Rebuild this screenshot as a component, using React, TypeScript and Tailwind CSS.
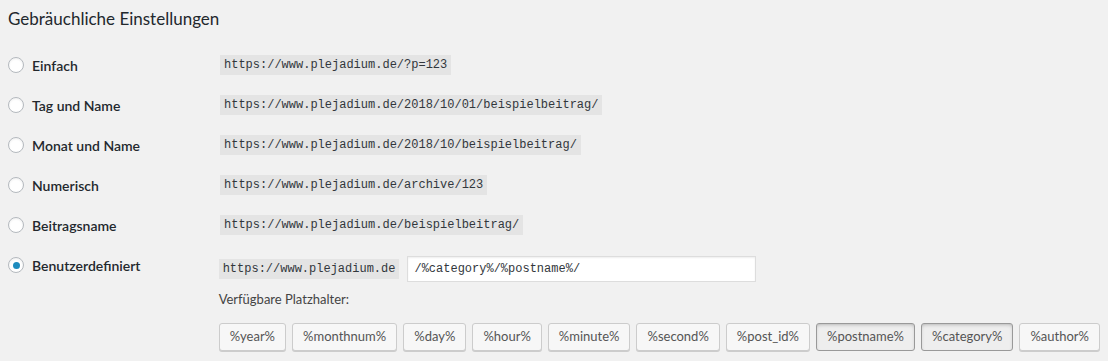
import { useState } from "react";

const options = [
  { label: "Einfach", url: "https://www.plejadium.de/?p=123" },
  { label: "Tag und Name", url: "https://www.plejadium.de/2018/10/01/beispielbeitrag/" },
  { label: "Monat und Name", url: "https://www.plejadium.de/2018/10/beispielbeitrag/" },
  { label: "Numerisch", url: "https://www.plejadium.de/archive/123" },
  { label: "Beitragsname", url: "https://www.plejadium.de/beispielbeitrag/" },
];

const tags = [
  "%year%",
  "%monthnum%",
  "%day%",
  "%hour%",
  "%minute%",
  "%second%",
  "%post_id%",
  "%postname%",
  "%category%",
  "%author%",
];

const activeTags = ["%postname%", "%category%"];

function Radio({ checked }: { checked?: boolean }) {
  return (
    <span className="flex h-4 w-4 shrink-0 items-center justify-center rounded-full border border-[#b4b9be] bg-white shadow-[inset_0_1px_2px_rgba(0,0,0,0.07)]">
      {checked && <span className="h-[7px] w-[7px] rounded-full bg-[#1e8cbe]" />}
    </span>
  );
}

function Code({ children }: { children: string }) {
  return (
    <code className="bg-[#e4e4e4] px-[4px] py-[2px] font-['Liberation_Mono',monospace] text-[12px] leading-4 text-[#32373c]">
      {children}
    </code>
  );
}

export default function App() {
  const [structure] = useState("/%category%/%postname%/");

  return (
    <main className="min-h-screen bg-[#f1f1f1] px-2 pt-[7px] font-['Lato',sans-serif] text-[#23282d]">
      <h2 className="text-[17px] leading-6">Gebräuchliche Einstellungen</h2>

      <div className="mt-[14px] flex flex-col">
        {options.map((o) => (
          <div key={o.label} className="flex h-10 items-center">
            <div className="flex w-[212px] items-center gap-2">
              <Radio />
              <span className="text-[14px] font-semibold">{o.label}</span>
            </div>
            <Code>{o.url}</Code>
          </div>
        ))}

        <div className="flex items-start">
          <div className="flex h-10 w-[212px] items-center gap-2">
            <Radio checked />
            <span className="text-[14px] font-semibold">Benutzerdefiniert</span>
          </div>
          <div className="flex flex-col pt-[11px]">
            <div className="flex h-[26px] items-center gap-2">
              <Code>https://www.plejadium.de</Code>
              <div className="flex h-[26px] w-[349px] items-center border border-[#ddd] bg-white px-[6px] font-['Liberation_Mono',monospace] text-[12px] text-[#32373c] shadow-[inset_0_1px_2px_rgba(0,0,0,0.07)]">
                {structure}
              </div>
            </div>
            <p className="mt-[7px] text-[13px] leading-5 text-[#444]">Verfügbare Platzhalter:</p>
            <div className="mt-[14px] flex gap-[6px]">
              {tags.map((t) => {
                const active = activeTags.includes(t);
                return (
                  <button
                    key={t}
                    className={
                      active
                        ? "h-7 rounded-[3px] border border-[#999] bg-[#eee] px-[10px] text-[13px] text-[#555] shadow-[inset_0_2px_5px_-3px_rgba(0,0,0,0.5)]"
                        : "h-7 rounded-[3px] border border-[#ccc] bg-[#f7f7f7] px-[10px] text-[13px] text-[#555] shadow-[0_1px_0_#ccc]"
                    }
                  >
                    {t}
                  </button>
                );
              })}
            </div>
          </div>
        </div>
      </div>
    </main>
  );
}
